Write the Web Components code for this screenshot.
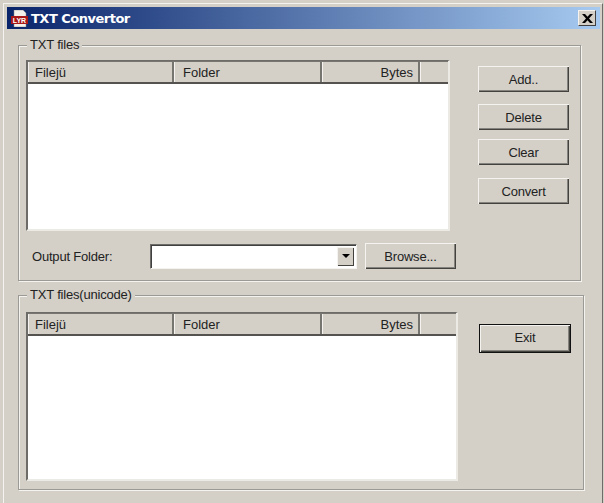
<!DOCTYPE html>
<html>
<head>
<meta charset="utf-8">
<title>TXT Convertor</title>
<style>
  html, body { margin: 0; height: 100%; background: #d4d0c8; overflow: hidden; }
  body { font: 13px "Liberation Sans", Arial, sans-serif; color: #222; }
</style>
</head>
<body>
<txt-window caption="TXT Convertor">
  <win-group label="TXT files" style="--group-w:563px; --group-h:236px; --group-pad:14px;">
    <div class="upper" style="display:grid; grid-template-columns:424px 1fr; height:100%;">
      <div style="display:flex; flex-direction:column;">
        <win-list style="--list-w:424px; --list-h:171px;"></win-list>
        <div style="display:flex; align-items:center; margin-top:12px; width:431px;">
          <span style="width:124px; padding-left:6px; box-sizing:border-box; letter-spacing:-.2px;">Output Folder:</span>
          <win-combo></win-combo>
          <win-button style="--btn-w:91px; --btn-h:26px; margin-left:8px;">Browse...</win-button>
        </div>
      </div>
      <div style="display:flex; flex-direction:column; margin:6px 0 0 28px;">
        <win-button style="--btn-w:91px;">Add..</win-button>
        <win-button style="--btn-w:91px; margin-top:12px;">Delete</win-button>
        <win-button style="--btn-w:91px; margin-top:9px;">Clear</win-button>
        <win-button style="--btn-w:91px; margin-top:13px;">Convert</win-button>
      </div>
    </div>
  </win-group>
  <win-group label="TXT files(unicode)" style="--group-w:566px; --group-h:195px; margin-top:14px;">
    <div style="display:flex; align-items:flex-start;">
      <win-list style="--list-w:432px; --list-h:169px;"></win-list>
      <win-button default style="--btn-w:92px; --btn-h:29px; margin:12px 0 0 21px;">Exit</win-button>
    </div>
  </win-group>
</txt-window>

<script>
// main dialog frame with caption bar
class TxtWindow extends HTMLElement {
  constructor() {
    super();
    this.attachShadow({ mode: 'open' });
    this.shadowRoot.innerHTML = `
      <style>
        :host { display: block; height: 503px; box-sizing: border-box; padding: 3px 1px 0 3px; }
        .frame {
          height: 100%; box-sizing: border-box; padding: 3px 2px 0 3px;
          border-top: 1px solid #f4f3ef; border-left: 1px solid #f4f3ef;
          border-right: 1px solid #6e6c68;
        }
        .bar {
          height: 22px; display: flex; align-items: center; box-sizing: border-box; padding: 0 4px 0 3px;
          background: linear-gradient(to right, #0a246a, #a6caf0);
          color: #fff; font: bold 13px "DejaVu Sans", Verdana, sans-serif;
        }
        .bar svg { flex: none; width: 19px; height: 17px; margin-right: 2px; }
        .bar span { flex: 1; letter-spacing: -.5px; }
        .close {
          width: 18px; height: 16px; box-sizing: border-box; background: #d4d0c8;
          border: 1px solid; border-color: #f4f3ef #404040 #404040 #f4f3ef;
          display: flex; align-items: center; justify-content: center;
        }
        .close svg { width: 11px; height: 9px; margin: 0; }
        .body { padding: 16px 0 0 11px; }
      </style>
      <div class="frame">
        <div class="bar">
          <svg viewBox="0 0 19 17">
            <path d="M4 0h9l3 3v14H4z" fill="#f4f0ea" stroke="#888" stroke-width=".5"/>
            <rect x="1" y="6" width="17" height="8" fill="#a81818"/>
            <text x="9.500" y="12.500" font-family="Liberation Sans" font-size="7" font-weight="bold" fill="#fff" text-anchor="middle">LYR</text>
          </svg>
          <span></span>
          <div class="close">
            <svg viewBox="0 0 11 9"><path d="M0 0h3l2.500 2.800L8 0h3L7 4.500 11 9H8L5.500 6.200 3 9H0l4-4.500z" fill="#000"/></svg>
          </div>
        </div>
        <div class="body"><slot></slot></div>
      </div>`;
    this.shadowRoot.querySelector('.bar span').textContent = this.getAttribute('caption');
  }
}

// etched group box, legend sits over the top line
class WinGroup extends HTMLElement {
  constructor() {
    super();
    this.attachShadow({ mode: 'open' });
    this.shadowRoot.innerHTML = `
      <style>
        :host { display: block; width: var(--group-w); height: var(--group-h); position: relative; box-sizing: border-box; }
        .box {
          width: 100%; height: 100%; box-sizing: border-box; padding: var(--group-pad, 16px) 0 0 7px;
          border: 1px solid #9c9a94; box-shadow: inset 1px 1px 0 #f4f3ef, 1px 1px 0 #f4f3ef;
        }
        .label {
          position: absolute; left: 9px; top: -8px; padding: 0 3px; background: #d4d0c8;
          line-height: 16px; letter-spacing: -.2px; white-space: nowrap;
        }
      </style>
      <div class="box"><slot></slot></div>
      <div class="label"></div>`;
    this.shadowRoot.querySelector('.label').textContent = this.getAttribute('label');
  }
}

// sunken list view with column headers
class WinList extends HTMLElement {
  constructor() {
    super();
    this.attachShadow({ mode: 'open' });
    this.shadowRoot.innerHTML = `
      <style>
        :host { display: block; width: var(--list-w); height: var(--list-h); box-sizing: border-box; flex: none;
          border-style: solid; border-width: 1px 2px 2px 2px; border-color: #6e6c68 #eceae5 #eceae5 #6e6c68; background: #fff; overflow: hidden; }
        .head { display: flex; height: 23px; background: #d4d0c8; border-bottom: 2px solid #55534f; box-sizing: border-box; border-top: 1px solid #77756f; }
        .col { box-sizing: border-box; height: 100%; line-height: 22px; padding: 0 5px; white-space: nowrap;
          border-left: 1px solid #f4f3ef; border-right: 2px solid #77756f; }
        .name { width: 146px; padding-left: 6px; }
        .folder { width: 148px; padding-left: 8px; }
        .bytes { width: 98px; text-align: right; }
        .rest { flex: 1; border-right: 0; }
      </style>
      <div class="head">
        <div class="col name">Filejü</div>
        <div class="col folder">Folder</div>
        <div class="col bytes">Bytes</div>
        <div class="col rest"></div>
      </div>`;
  }
}

// push button, "default" attribute gives the black outline
class WinButton extends HTMLElement {
  constructor() {
    super();
    this.attachShadow({ mode: 'open' });
    this.shadowRoot.innerHTML = `
      <style>
        :host { display: block; width: var(--btn-w); height: var(--btn-h, 26px); flex: none; box-sizing: border-box; }
        :host([default]) { border: 1px solid #111; }
        :host([default]) .face { padding-bottom: 3px; }
        .face {
          height: 100%; box-sizing: border-box; display: flex; align-items: center; justify-content: center;
          background: #d4d0c8; letter-spacing: -.2px;
          box-shadow: inset 1px 1px 0 #f4f3ef, inset -1px -1px 0 #44423e, inset -2px -2px 0 #85837d;
        }
      </style>
      <div class="face"><slot></slot></div>`;
  }
}

// drop-down combo, empty edit field and arrow button
class WinCombo extends HTMLElement {
  constructor() {
    super();
    this.attachShadow({ mode: 'open' });
    this.shadowRoot.innerHTML = `
      <style>
        :host { display: flex; width: 207px; height: 25px; flex: none; box-sizing: border-box; justify-content: flex-end; align-items: center;
          padding: 2px; background: #fff; border: 1px solid; border-color: #6e6c68 #f4f3ef #f4f3ef #6e6c68; box-shadow: inset 1px 1px 0 #404040; }
        .arrow { width: 17px; height: 19px; display: flex; align-items: center; justify-content: center; background: #d4d0c8;
          box-shadow: inset 1px 1px 0 #f4f3ef, inset -1px -1px 0 #44423e; }
        .arrow i { border: 4px solid transparent; border-top: 4px solid #000; border-bottom: 0; }
      </style>
      <div class="arrow"><i></i></div>`;
  }
}

customElements.define('txt-window', TxtWindow);
customElements.define('win-group', WinGroup);
customElements.define('win-list', WinList);
customElements.define('win-button', WinButton);
customElements.define('win-combo', WinCombo);
</script>
</body>
</html>
